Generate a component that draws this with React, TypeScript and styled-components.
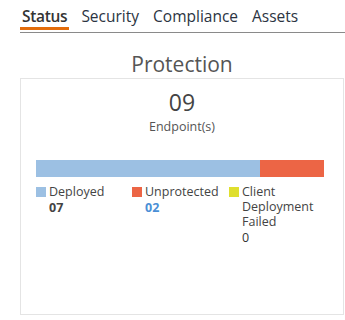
import React from "react";
import styled, { createGlobalStyle } from "styled-components";

const Global = createGlobalStyle`
  html, body { margin: 0; padding: 0; background: #fff; }
  body { font-family: "Open Sans", "Liberation Sans", sans-serif; color: #333; }
`;

const Page = styled.div`
  width: 345px;
  height: 320px;
  padding-top: 5px;
  box-sizing: border-box;
`;

const Tabs = styled.div`
  display: flex;
  gap: 10px;
  margin-left: 20px;
  border-bottom: 1px solid #8a8a8a;
  height: 27px;
`;

const Tab = styled.div<{ $active?: boolean }>`
  font-size: 15.5px;
  line-height: 22px;
  padding: 0 2px;
  font-weight: ${(p) => (p.$active ? 600 : 400)};
  letter-spacing: ${(p) => (p.$active ? "-0.3px" : "0")};
  color: ${(p) => (p.$active ? "#333" : "#2b3442")};
  border-bottom: 3px solid ${(p) => (p.$active ? "#e36c0a" : "transparent")};
  height: 22px;
`;

const Title = styled.div`
  text-align: center;
  font-size: 21px;
  color: #555;
  margin: 17px 0 0 20px;
  line-height: 28px;
  width: 324px;
`;

const Card = styled.div`
  margin: 0 0 0 20px;
  width: 324px;
  height: 237px;
  box-sizing: border-box;
  border: 1px solid #e4e4e4;
  display: flex;
  flex-direction: column;
  align-items: stretch;
`;

const Count = styled.div`
  text-align: center;
  font-size: 23px;
  line-height: 28px;
  margin-top: 9px;
  color: #444;
`;

const Unit = styled.div`
  text-align: center;
  font-size: 12.5px;
  line-height: 16px;
  margin-top: 3px;
  color: #555;
`;

const Bar = styled.div`
  display: flex;
  height: 17px;
  margin: 25px 19px 0 15px;
`;

const Segment = styled.div<{ $color: string }>`
  background: ${(p) => p.$color};
  height: 100%;
`;

const Legend = styled.div`
  display: grid;
  grid-template-columns: 96px 97px 94px;
  margin: 7px 19px 0 15px;
`;

const Item = styled.div`
  display: flex;
  align-items: flex-start;
  gap: 3px;
`;

const Swatch = styled.div<{ $color: string }>`
  width: 10px;
  height: 10px;
  background: ${(p) => p.$color};
  margin-top: 3px;
  flex: none;
`;

const ItemText = styled.div`
  font-size: 12.5px;
  line-height: 15px;
  color: #444;
  width: 80px;
`;

const Value = styled.div<{ $color?: string; $bold?: boolean }>`
  font-weight: ${(p) => (p.$bold ? 700 : 400)};
  color: ${(p) => p.$color || "#444"};
  margin-top: 1px;
`;

const items = [
  { label: "Deployed", value: "07", color: "#9cc0e3", valueColor: "#444", bold: true },
  { label: "Unprotected", value: "02", color: "#ec6545", valueColor: "#4a8fd6", bold: true },
  { label: "Client Deployment Failed", value: "0", color: "#dfdf2e", valueColor: "#333", bold: false },
];

export default function App() {
  return (
    <Page>
      <Global />
      <Tabs>
        <Tab $active>Status</Tab>
        <Tab>Security</Tab>
        <Tab>Compliance</Tab>
        <Tab>Assets</Tab>
      </Tabs>
      <Title>Protection</Title>
      <Card>
        <Count>09</Count>
        <Unit>Endpoint(s)</Unit>
        <Bar>
          <Segment $color="#9cc0e3" style={{ width: `${(7 / 9) * 100}%` }} />
          <Segment $color="#ec6545" style={{ width: `${(2 / 9) * 100}%` }} />
        </Bar>
        <Legend>
          {items.map((it) => (
            <Item key={it.label}>
              <Swatch $color={it.color} />
              <ItemText>
                {it.label}
                <Value $color={it.valueColor} $bold={it.bold}>{it.value}</Value>
              </ItemText>
            </Item>
          ))}
        </Legend>
      </Card>
    </Page>
  );
}
